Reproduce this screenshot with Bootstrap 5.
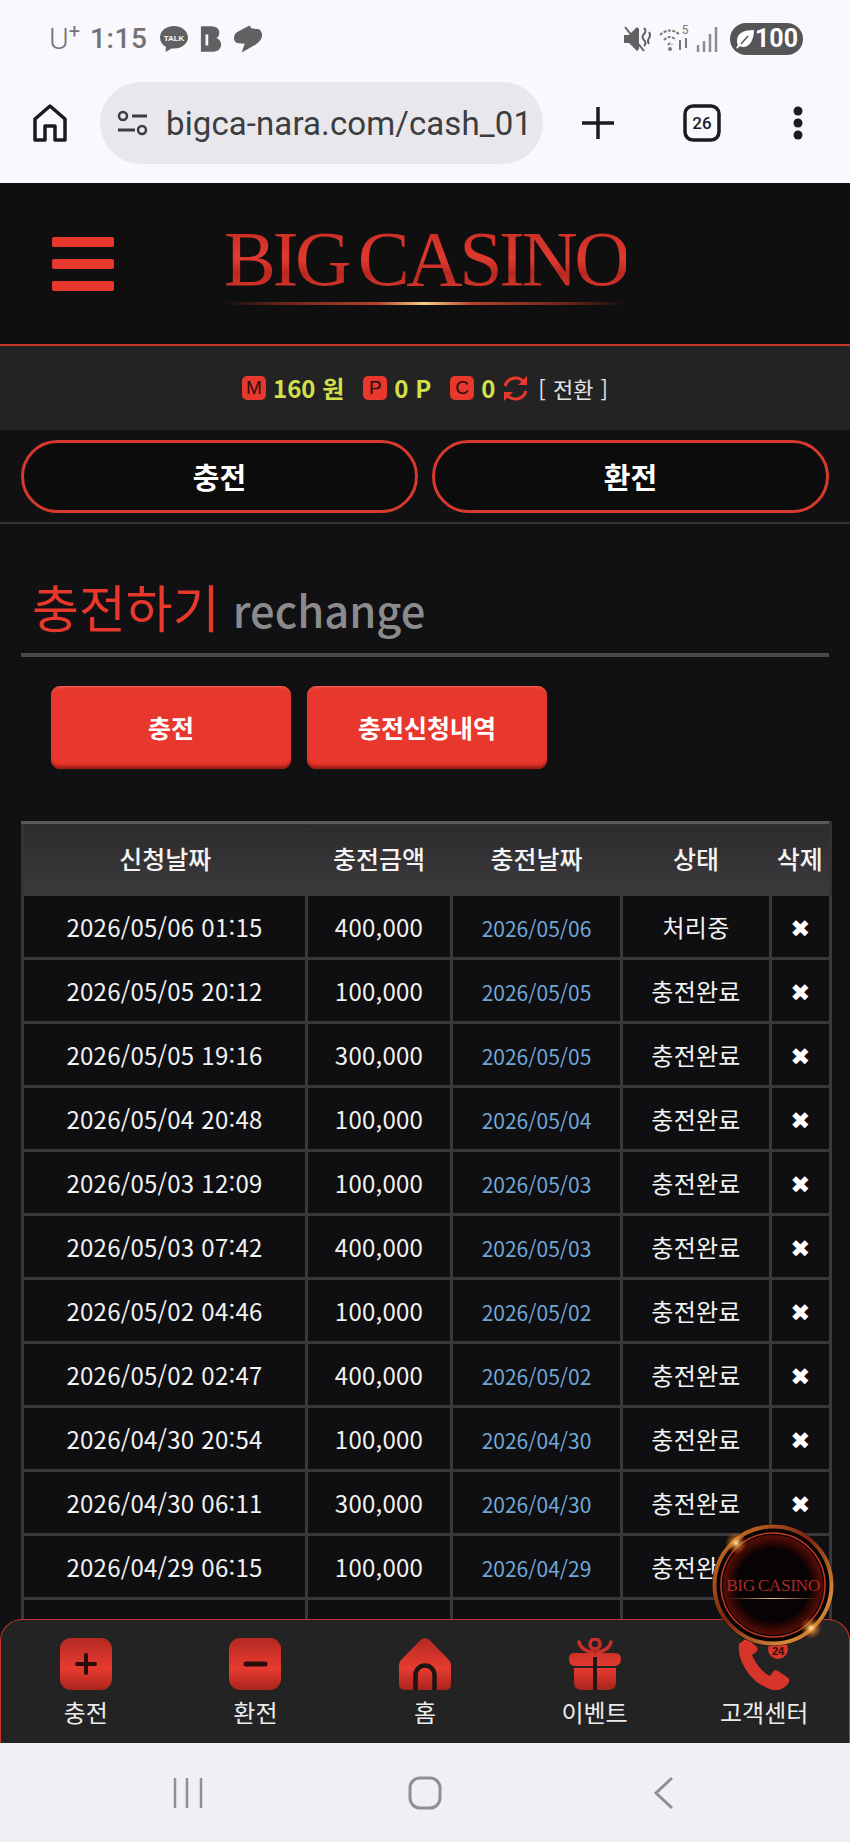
<!DOCTYPE html>
<html lang="ko">
<head>
  <meta charset="UTF-8" />
  <title>BIG CASINO</title>
  <meta name="viewport" content="width=device-width, initial-scale=1" />
  <link href="https://cdn.jsdelivr.net/npm/bootstrap@5.3.3/dist/css/bootstrap.min.css" rel="stylesheet" />
  <style>
    html, body { height: 100%; }
    body {
      background: #111012;
      color: #fff;
      font-family: "Noto Sans CJK KR", "Noto Sans", sans-serif;
      overflow: hidden;
    }
    .phone { height: 1842px; }

    /* android + chrome bars */
    .status-bar { height: 72px; padding: 6px 47px 0 49px; background: #f8f8fd; color: #737375; font-family: Roboto, sans-serif; }
    .carrier { font-size: 30px; font-weight: 300; line-height: 1; }
    .carrier sup { font-size: 20px; top: -.55em; font-weight: 400; }
    .clock { font-size: 28px; font-weight: 500; margin: 0 11px 0 10px; letter-spacing: .6px; }
    .stat-gap { margin-right: 11px; }
    .batt { width: 73px; height: 32px; border-radius: 16px; background: #555557; color: #fff; font-size: 25px; font-weight: 700; padding-left: 5px; margin-left: 11px; }
    .url-bar { height: 111px; background: #f8f8fd; padding-left: 33px; }
    .url-pill { width: 443px; height: 82px; margin-left: 33px; border-radius: 41px; background: #e8e8ec; padding-left: 17px; overflow: hidden; margin-top: -10px; }
    .url-text { width: 362px; margin-left: 18px; padding-top: 2px; font-family: Roboto, sans-serif; font-size: 33px; color: #3c3d40; white-space: nowrap; overflow: hidden; letter-spacing: .1px; }
    .chrome-btn { position: relative; margin-top: -10px; flex-shrink: 0; }
    .plus-btn { margin-left: 38px; }
    .tabs-btn { margin-left: 68px; }
    .menu-btn { margin-left: 71px; }
    .nav-bar { height: 99px; background: #f1eff3; padding: 0 0 0 172px; }
    .nav-home { margin-left: 204px; }
    .nav-back { margin-left: 211px; }

    /* page */
    .site { position: relative; overflow: hidden; background: #111012; }
    .site-head { height: 163px; background: #0f0f10; border-bottom: 2px solid #c4352a; padding: 54px 0 0 52px; }
    .burger { width: 62px; }
    .burger span { display: block; height: 10px; margin-bottom: 12px; border-radius: 2px; background: #e8372c; }
    .logo-box { width: 402px; margin-left: 110px; margin-top: -18px; }
    .logo-text {
      font-family: "Liberation Serif", serif;
      font-size: 78px;
      line-height: 80px;
      letter-spacing: -3.5px;
      word-spacing: -6px;
      white-space: nowrap;
      background: linear-gradient(180deg, #c92d24 10%, #e03a2e 50%, #b82820 68%, #d9382c 90%);
      -webkit-background-clip: text;
      background-clip: text;
      color: transparent;
    }
    .logo-line { height: 3px; margin-top: 3px; background: linear-gradient(90deg, transparent, #6e2418 15%, #b2422c 38%, #f6cf86 50%, #b2422c 62%, #6e2418 85%, transparent); }

    .money-bar { height: 84px; background: #232324; font-size: 24px; font-weight: 700; color: #d3e04a; }
    .coin { display: inline-flex; align-items: center; justify-content: center; width: 24px; height: 24px; border-radius: 5px; background: #e8372c; color: #26110f; font-family: "Liberation Sans", sans-serif; font-size: 19px; font-weight: 400; margin-right: 7px; }
    .coin-next { margin-left: 19px; }
    .swap-icon { margin-left: 7px; }
    .swap-link { color: #e4e4e4; font-weight: 400; font-size: 22px; margin-left: 9px; word-spacing: 1px; }

    .tab-row { padding: 10px 21px 9px; gap: 14px; border-bottom: 2px solid #333335; }
    .tab-btn { flex: 1 1 0; height: 73px; border: 3px solid #d63a2e; border-radius: 37px; background: #0c0c0d; color: #fff; font-size: 29px; font-weight: 700; }
    .tab-btn:hover { background: #0c0c0d; color: #fff; border-color: #d63a2e; }

    .page-title { margin: 0 21px; padding: 57px 0 0 11px; height: 133px; border-bottom: 4px solid #49494b; line-height: 1; white-space: nowrap; }
    .page-title b { font-size: 51px; font-weight: 400; color: #e8382c; }
    .page-title span { font-size: 43.500px; font-weight: 500; color: #8b8b8d; margin-left: 5px; }
    .sub-btns { padding: 29px 0 52px 51px; }
    .sub-btn { width: 240px; height: 83px; border: 0; border-radius: 9px; background: #e8372c; color: #fff; font-size: 25px; font-weight: 700; box-shadow: inset 0 -5px 3px -2px #9d1c15, inset 0 3px 3px -2px #f06a5e; }
    .sub-btn:hover { background: #e8372c; color: #fff; }

    .table-wrap { padding: 0 21px; }
    .cash-table { table-layout: fixed; width: 808px; margin: 0; --bs-table-bg: transparent; --bs-table-color: #f2f2f2; border-collapse: collapse; }
    .col-req { width: 284px; }
    .col-amt { width: 145px; }
    .col-date { width: 170px; }
    .col-state { width: 149px; }
    .col-del { width: 60px; }
    .cash-table th { height: 72px; padding: 0; border: 0; border-top: 3px solid #59595b; text-align: center; vertical-align: middle; font-size: 25px; font-weight: 500; color: #f4f4f4; background: linear-gradient(180deg, #2d2b2d, #3b393b); box-shadow: none; }
    .cash-table th:first-child { border-left: 3px solid #343234; }
    .cash-table th:last-child { border-right: 3px solid #343234; }
    .cash-table td { height: 64px; padding: 0; border: 3px solid #39393b; text-align: center; vertical-align: middle; font-size: 24px; letter-spacing: .25px; font-weight: 400; background: #0f0e10; box-shadow: none; white-space: nowrap; }
    .cash-table thead + tbody { border-top: 3px solid #0f0e10; }
    .cash-table td.date-cell { font-size: 21px; letter-spacing: 0; color: #6fa8d8; padding-top: 4px; }
    .del-x { font-family: "DejaVu Sans", sans-serif; font-size: 24px; color: #fff; line-height: 1; }

    /* fixed footer and floating badge, both sit over the table */
    .foot-nav { position: absolute; left: 0; right: 0; bottom: 0; height: 124px; padding-top: 18px; background: #232324; border: 1px solid #c4352a; border-bottom: 0; border-radius: 22px 22px 0 0; }
    .foot-item { flex: 1 1 0; font-size: 24px; line-height: 1; color: #ececec; text-decoration: none; }
    .foot-item span { margin-top: 10px; }
    .float-badge { position: absolute; right: 16px; top: 1341px; width: 122px; height: 122px; border-radius: 50%; background: #070203; }
    .badge-ring { position: absolute; inset: 0; }
    .float-badge i { position: relative; font-family: "Liberation Serif", serif; font-style: normal; font-size: 17.500px; color: #a82a24; letter-spacing: -.5px; word-spacing: -1px; white-space: nowrap; line-height: 1; margin-top: 6px; }
    .float-badge u { position: relative; display: block; width: 90px; height: 1px; margin-top: 4px; background: linear-gradient(90deg, transparent, #f2c57c, transparent); }
  </style>
</head>
<body>
  <div class="phone d-flex flex-column">

    <!-- status bar -->
    <div class="status-bar d-flex align-items-center flex-shrink-0">
      <span class="carrier">U<sup>+</sup></span>
      <span class="clock">1:15</span>
      <svg width="30" height="28" viewBox="0 0 30 28" class="stat-gap"><path d="M15 1C7 1 1 6 1 12.500c0 4 2.300 7.400 6 9.500L6.500 27l6-3.600c.8.100 1.700.1 2.500.1 8 0 14-5 14-11S23 1 15 1z" fill="#616163"/><text x="15" y="16" text-anchor="middle" font-family="Liberation Sans" font-size="8" font-weight="700" fill="#f8f8fd">TALK</text></svg>
      <svg width="22" height="30" viewBox="0 0 24 30" class="stat-gap"><path d="M1 1h11c6 0 9 3 9 7 0 3-1 5-3 6 3 1 5 4 5 7 0 5-4 8-10 8H1z" fill="#616163"/><rect x="6" y="10" width="3" height="12" fill="#f8f8fd"/></svg>
      <svg width="31" height="30" viewBox="0 0 32 30"><path d="M17 1 4 8C0 11 0 17 4 19l8 1-3 9 14-8c8-5 9-12 4-16l-8-1z" fill="#616163"/></svg>
      <span class="ms-auto d-flex align-items-center">
        <svg width="28" height="30" viewBox="0 0 28 30" class="me-2"><path d="M1 11h5l8-8 2 2v20l-2 2-8-8H1z" fill="#616163"/><path d="M2 3l19 24" stroke="#616163" stroke-width="2"/><path d="M21 4q3 3 0 6t0 6 0 6M26 8q2 3 0 6t0 6" fill="none" stroke="#616163" stroke-width="2"/></svg>
        <svg width="32" height="30" viewBox="0 0 32 30" class="me-1"><g fill="none" stroke="#77777a" stroke-width="2" stroke-dasharray="3 1.500"><path d="M1 11q10-9 20 0"/><path d="M5 16q6-6 12 0"/><path d="M9 21q2-3 4 0"/></g><circle cx="11" cy="25" r="2" fill="#77777a"/><text x="26" y="10" text-anchor="middle" font-family="Roboto" font-size="12" fill="#77777a">5</text><path d="M21 16v10M27 14v10" stroke="#77777a" stroke-width="2"/></svg>
        <svg width="24" height="28" viewBox="0 0 24 28"><path d="M3 20v7M9 16v11M15 9v18M21 2v25" stroke="#8e8e90" stroke-width="2.500"/></svg>
        <span class="batt d-inline-flex align-items-center">
          <svg width="20" height="20" viewBox="0 0 20 20" class="flex-shrink-0"><path d="M19 1C9 1 2 4 2 12c0 2 .5 3 1 4L1 19l1.500 .5L5 17c1 .7 2 1 3.500 1C15 18 19 10 19 1z" fill="#fff"/><path d="M6 15 13 7" stroke="#555557" stroke-width="1.500"/></svg>
          100
        </span>
      </span>
    </div>

    <!-- browser bar -->
    <div class="url-bar d-flex align-items-center flex-shrink-0">
      <svg class="chrome-btn" width="34" height="38" viewBox="0 0 34 38"><path d="M2 36V15L17 2l15 13v21H22V22H12v14z" fill="none" stroke="#1c1c1f" stroke-width="3.500" stroke-linejoin="round"/></svg>
      <div class="url-pill d-flex align-items-center flex-shrink-0">
        <svg class="flex-shrink-0" width="31" height="26" viewBox="0 0 31 26"><circle cx="6" cy="6" r="4" fill="none" stroke="#3c3d40" stroke-width="2.500"/><path d="M15 6h15M1 20h17" stroke="#3c3d40" stroke-width="3"/><circle cx="25" cy="20" r="4" fill="none" stroke="#3c3d40" stroke-width="2.500"/></svg>
        <div class="url-text">bigca-nara.com/cash_01</div>
      </div>
      <svg class="chrome-btn plus-btn" width="34" height="34" viewBox="0 0 34 34"><path d="M17 1v32M1 17h32" stroke="#1c1c1f" stroke-width="3.500"/></svg>
      <svg class="chrome-btn tabs-btn" width="38" height="38" viewBox="0 0 38 38"><rect x="2" y="2" width="34" height="34" rx="8" fill="none" stroke="#1c1c1f" stroke-width="3.500"/><text x="19" y="25" text-anchor="middle" font-family="Roboto" font-size="17" font-weight="500" fill="#1c1c1f">26</text></svg>
      <svg class="chrome-btn menu-btn" width="12" height="34" viewBox="0 0 12 34"><circle cx="6" cy="5" r="4.500" fill="#1c1c1f"/><circle cx="6" cy="17" r="4.500" fill="#1c1c1f"/><circle cx="6" cy="29" r="4.500" fill="#1c1c1f"/></svg>
    </div>

    <!-- site -->
    <div class="site flex-grow-1">
      <header class="site-head d-flex">
        <div class="burger"><span></span><span></span><span></span></div>
        <div class="logo-box">
          <div class="logo-text">BIG CASINO</div>
          <div class="logo-line"></div>
        </div>
      </header>

      <div class="money-bar d-flex align-items-center justify-content-center">
        <span class="coin">M</span>160 원
        <span class="coin coin-next">P</span>0 P
        <span class="coin coin-next">C</span>0
        <svg class="swap-icon" width="27" height="27" viewBox="0 0 27 27"><g fill="none" stroke="#e8372c" stroke-width="3"><path d="M3 11A11 11 0 0 1 22 7"/><path d="M24 16A11 11 0 0 1 5 20"/></g><path d="M25 1v9h-9zM2 26v-9h9z" fill="#e8372c"/></svg>
        <a class="swap-link text-decoration-none">[ 전환 ]</a>
      </div>

      <div class="tab-row d-flex">
        <button class="btn tab-btn" type="button">충전</button>
        <button class="btn tab-btn" type="button">환전</button>
      </div>

      <h2 class="page-title mb-0"><b>충전하기</b> <span>rechange</span></h2>

      <div class="sub-btns d-flex gap-3">
        <button class="btn sub-btn" type="button">충전</button>
        <button class="btn sub-btn" type="button">충전신청내역</button>
      </div>

      <div class="table-wrap">
        <table class="table cash-table">
          <colgroup>
            <col class="col-req" /><col class="col-amt" /><col class="col-date" /><col class="col-state" /><col class="col-del" />
          </colgroup>
          <thead>
            <tr><th>신청날짜</th><th>충전금액</th><th>충전날짜</th><th>상태</th><th>삭제</th></tr>
          </thead>
          <tbody id="cashRows"></tbody>
        </table>
      </div>

      <nav class="foot-nav d-flex">
        <a class="foot-item d-flex flex-column align-items-center">
          <svg width="52" height="52" viewBox="0 0 52 52"><defs><linearGradient id="redFade" gradientUnits="userSpaceOnUse" x1="0" y1="0" x2="0" y2="52"><stop offset="0" stop-color="#b32921"/><stop offset=".58" stop-color="#e83b30"/><stop offset="1" stop-color="#a8241d"/></linearGradient></defs><rect width="52" height="52" rx="11" fill="url(#redFade)"/><path d="M26 17v18M17 26h18" stroke="#2a0d0b" stroke-width="4" stroke-linecap="round"/></svg>
          <span>충전</span>
        </a>
        <a class="foot-item d-flex flex-column align-items-center">
          <svg width="52" height="52" viewBox="0 0 52 52"><rect width="52" height="52" rx="11" fill="url(#redFade)"/><path d="M17 26h19" stroke="#2a0d0b" stroke-width="5" stroke-linecap="round"/></svg>
          <span>환전</span>
        </a>
        <a class="foot-item d-flex flex-column align-items-center">
          <svg width="52" height="52" viewBox="0 0 52 52"><path d="M22 1.500q4-3 8 0L50 22q2 2 2 5V46q0 6-6 6H6q-6 0-6-6V27q0-3 2-5z" fill="url(#redFade)"/><path d="M16.500 52V37a9.500 9.500 0 0 1 19 0V52" fill="none" stroke="#1d1413" stroke-width="4.500"/></svg>
          <span>홈</span>
        </a>
        <a class="foot-item d-flex flex-column align-items-center">
          <svg width="52" height="52" viewBox="0 0 52 52"><g fill="none" stroke="#c82f26" stroke-width="3.500" stroke-linecap="round"><path d="M24 14C18 14 11 10 10 4"/><path d="M28 14C34 14 41 10 42 4"/><circle cx="26" cy="6" r="5"/></g><path d="M6 15h40q6 0 6 6t-6 7H6q-6 0-6-7t6-6z" fill="url(#redFade)"/><path d="M5 30h42v14q0 8-8 8H13q-8 0-8-8z" fill="url(#redFade)"/><path d="M26 19v33" stroke="#231413" stroke-width="4"/></svg>
          <span>이벤트</span>
        </a>
        <a class="foot-item d-flex flex-column align-items-center">
          <svg width="52" height="52" viewBox="0 0 52 52"><path d="M9 0 1 6C-1 20 10 44 34 52c6 2 14-2 17-8 1-2 0-4-2-5l-9-6c-2-1-4-1-5 1l-3 4C25 35 17 25 14 17l4-3c2-1 2-3 1-5z" fill="#d8352a"/><circle cx="40" cy="11" r="10" fill="#d8352a"/><text x="40" y="17" text-anchor="middle" font-family="Liberation Sans" font-size="11" font-weight="700" fill="#2a0d0b">24</text></svg>
          <span class="text-nowrap">고객센터</span>
        </a>
      </nav>

      <div class="float-badge d-flex flex-column align-items-center justify-content-center">
        <svg class="badge-ring" width="122" height="122" viewBox="0 0 122 122">
          <defs>
            <linearGradient id="ringGold" x1="0" y1="0" x2="1" y2="1"><stop offset="0" stop-color="#d9822a"/><stop offset=".45" stop-color="#7a2410"/><stop offset=".8" stop-color="#d48a3a"/><stop offset="1" stop-color="#a85a20"/></linearGradient>
            <radialGradient id="sparkGlow"><stop offset="0" stop-color="#fff1c0"/><stop offset=".35" stop-color="#f0a040" stop-opacity=".7"/><stop offset="1" stop-color="#e05a10" stop-opacity="0"/></radialGradient>
            <radialGradient id="innerGlow"><stop offset=".72" stop-color="#070203"/><stop offset="1" stop-color="#5a0d06"/></radialGradient>
          </defs>
          <circle cx="61" cy="61" r="50" fill="url(#innerGlow)"/>
          <circle cx="61" cy="61" r="58.500" fill="none" stroke="url(#ringGold)" stroke-width="4"/>
          <circle cx="61" cy="61" r="52" fill="none" stroke="#c93a22" stroke-width="1.500"/>
          <circle cx="24" cy="19" r="11" fill="url(#sparkGlow)"/>
          <circle cx="99" cy="104" r="11" fill="url(#sparkGlow)"/>
        </svg>
        <i>BIG CASINO</i><u></u>
      </div>
    </div>

    <!-- android nav -->
    <div class="nav-bar d-flex align-items-center flex-shrink-0">
      <svg width="32" height="32" viewBox="0 0 32 32"><path d="M3 1v30M15 1v30M29 1v30" stroke="#8f8f92" stroke-width="2.500"/></svg>
      <svg class="nav-home" width="34" height="34" viewBox="0 0 34 34"><rect x="2" y="2" width="30" height="30" rx="10" fill="none" stroke="#8f8f92" stroke-width="3"/></svg>
      <svg class="nav-back" width="22" height="34" viewBox="0 0 22 34"><path d="M19 2 3 17l16 15" fill="none" stroke="#8f8f92" stroke-width="3"/></svg>
    </div>
  </div>

  <script src="https://cdn.jsdelivr.net/npm/bootstrap@5.3.3/dist/js/bootstrap.bundle.min.js"></script>
  <script>
    const rows = [
      ['2026/05/06 01:15', '400,000', '2026/05/06', '처리중'],
      ['2026/05/05 20:12', '100,000', '2026/05/05', '충전완료'],
      ['2026/05/05 19:16', '300,000', '2026/05/05', '충전완료'],
      ['2026/05/04 20:48', '100,000', '2026/05/04', '충전완료'],
      ['2026/05/03 12:09', '100,000', '2026/05/03', '충전완료'],
      ['2026/05/03 07:42', '400,000', '2026/05/03', '충전완료'],
      ['2026/05/02 04:46', '100,000', '2026/05/02', '충전완료'],
      ['2026/05/02 02:47', '400,000', '2026/05/02', '충전완료'],
      ['2026/04/30 20:54', '100,000', '2026/04/30', '충전완료'],
      ['2026/04/30 06:11', '300,000', '2026/04/30', '충전완료'],
      ['2026/04/29 06:15', '100,000', '2026/04/29', '충전완료'],
      ['', '', '', '']
    ];
    document.getElementById('cashRows').innerHTML = rows.map(r => `<tr>
      <td>${r[0]}</td><td>${r[1]}</td><td class="date-cell">${r[2]}</td><td>${r[3]}</td>
      <td>${r[0] ? '<span class="del-x">✖</span>' : ''}</td>
    </tr>`).join('');
  </script>
</body>
</html>
